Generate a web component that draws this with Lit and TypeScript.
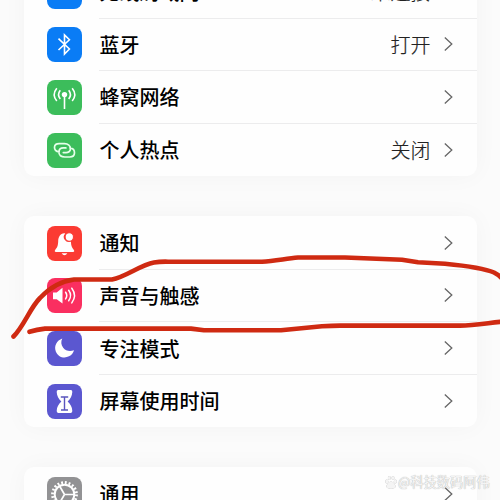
import { LitElement, html, svg, css, nothing } from "lit";
import { customElement, property } from "lit/decorators.js";

const glyphs: Record<string, unknown> = {
  wifi: svg`<path d="M8 15Q17.500 6 27 15M12 20Q17.500 15 23 20" fill="none" stroke="#fff" stroke-width="2"/>`,
  bluetooth: svg`<path d="M11.500 11.700 22.400 22 17.500 27V8L22.400 12.800 11.500 23" fill="none" stroke="#fff" stroke-width="1.600" stroke-linejoin="miter"/>`,
  cellular: svg`<circle cx="17.500" cy="14.600" r="2.700" fill="#fff"/>
    <path d="M17.500 15V29M13.300 10.300Q9.800 14.700 13.300 19.100M21.700 10.300Q25.200 14.700 21.700 19.100M9.800 8.300Q4.600 14.700 9.800 21.100M25.200 8.300Q30.400 14.700 25.200 21.100" fill="none" stroke="#fff" stroke-width="1.600"/>`,
  hotspot: svg`<path d="M12.200 18.800C9.300 18.600 7.400 16.700 7.500 14.300C7.600 11.900 9.500 10.700 12.200 10.700H17.500C21 10.700 23.600 12.700 23.500 15.700C23.400 18.300 21.300 19.800 18.500 19.600H16.300M22.900 14.800C25.800 15.200 27.600 17.300 27.500 19.900C27.400 22.500 25.500 24 22.800 24H17.800C14.200 24 11.800 22.300 11.900 19.100C12 16.500 13.900 14.800 16.600 14.900H18.900" fill="none" stroke="#e6ffea" stroke-width="1.700" stroke-linecap="round"/>`,
  bell: svg`<path d="M17.200 7.300C13.200 7.800 11.300 11 11.200 15C11 19.800 10.400 21.300 8.300 23.700C7.300 25 7.600 25.900 9 25.900H26C27.400 25.900 27.700 25 26.700 23.700C24.700 21.300 24.100 19.500 23.900 15.500A5 5 0 0 1 18.300 7.400Z" fill="#fff"/>
    <circle cx="22.300" cy="11" r="4.200" fill="#fff" stroke="#fb3b33" stroke-width="1.100"/><path d="M14.600 27.300H20.400Q17.500 31 14.600 27.300Z" fill="#fff"/>`,
  sound: svg`<path d="M6 14.400H9.700L15.500 9.800V25.400L9.700 21.300H6Z" fill="#fff"/>
    <path d="M18.600 14.200Q20.900 17.500 18.600 20.900M21.700 12.300Q25.400 17.500 21.700 22.800M24.800 10.200Q30.200 17.500 24.800 24.900" fill="none" stroke="#fff" stroke-width="1.500" stroke-linecap="round"/>`,
  moon: svg`<path d="M15.300 7.600C9.700 9.500 6.800 15.200 8.800 20.400C10.800 25.800 17 28 22 25.300C24.800 23.800 26.300 21.800 27 19.200C23.200 20.800 18.600 20 16.200 16.800C14 13.900 13.700 10.600 15.300 7.600Z" fill="#fff"/>`,
  hourglass: svg`<path d="M11.200 6H23.800Q25.500 6 25.300 8C25.100 12.200 23.500 14.800 20.600 17.400C23.500 20 25.100 22.700 25.300 26.800Q25.500 28.900 23.800 28.900H11.200Q9.500 28.900 9.700 26.800C9.900 22.700 11.500 20 14.400 17.400C11.500 14.800 9.900 12.200 9.700 8Q9.500 6 11.200 6Z" fill="#fff"/>
    <path d="M13.800 13H21.200M17.500 13V26M14 26H21" fill="none" stroke="#5a55bd" stroke-width="1.400"/>`,
  gear: svg`<circle cx="17.500" cy="17.500" r="12" fill="none" stroke="#fff" stroke-width="2.800" stroke-dasharray="1.885 1.885"/>
    <circle cx="17.500" cy="17.500" r="9.800" fill="none" stroke="#fff" stroke-width="2"/>
    <path d="M17.500 17.500H27M17.500 17.500 12.700 9.300M17.500 17.500 12.700 25.700" stroke="#fff" stroke-width="1.700"/>`,
};

interface Item { icon: string; tone: string; label: string; value?: string; }

const groups: Item[][] = [
  [
    { icon: "wifi", tone: "blue", label: "无线局域网", value: "未连接" },
    { icon: "bluetooth", tone: "blue", label: "蓝牙", value: "打开" },
    { icon: "cellular", tone: "green", label: "蜂窝网络" },
    { icon: "hotspot", tone: "green", label: "个人热点", value: "关闭" },
  ],
  [
    { icon: "bell", tone: "red", label: "通知" },
    { icon: "sound", tone: "pink", label: "声音与触感" },
    { icon: "moon", tone: "indigo", label: "专注模式" },
    { icon: "hourglass", tone: "indigo", label: "屏幕使用时间" },
  ],
  [{ icon: "gear", tone: "gray", label: "通用" }],
];

@customElement("settings-row")
class SettingsRow extends LitElement {
  @property({ attribute: false }) item!: Item;
  static styles = css`
    :host { display: flex; height: 52.75px; box-sizing: border-box; padding: 1.500px 24px 0 23.500px; align-items: center; }
    .icon { width: 35px; height: 35px; border-radius: 8px; flex: none; }
    .icon svg { display: block; }
    .blue { background: #0a7cf5; }
    .green { background: #3cbd5b; }
    .red { background: #fb3b33; }
    .pink { background: #fa2f60; }
    .indigo { background: #5b57d0; }
    .gray { background: #929294; }
    .label { margin-left: 17.500px; font-size: 20px; line-height: 30px; font-weight: 500; color: #000; flex: 1; }
    .value { font-size: 20px; line-height: 30px; font-weight: 300; color: #222; -webkit-text-stroke: 0.200px #222; margin-right: 13px; }
    .chevron { width: 9px; height: 16px; margin-top: -1px; flex: none; }
  `;
  render() {
    const { icon, tone, label, value } = this.item;
    return html`
      <div class="icon ${tone}"><svg width="35" height="35" viewBox="0 0 35 35">${glyphs[icon]}</svg></div>
      <span class="label">${label}</span>
      ${value ? html`<span class="value">${value}</span>` : nothing}
      <svg class="chevron" viewBox="0 0 9 16"><path d="M.8 1.500 7.800 8 .8 14.500" fill="none" stroke="#666" stroke-width="1.300"/></svg>
    `;
  }
}

@customElement("app-root")
class AppRoot extends LitElement {
  static styles = css`
    :host { display: block; position: relative; width: 500px; height: 500px; overflow: hidden; background: #fbfbfb;
      font-family: "Noto Sans CJK SC", sans-serif; }
    .list { display: flex; flex-direction: column; gap: 40.100px; margin-top: -35.200px; padding: 0 23.500px; }
    .card { background: #fefefe; border-radius: 10px; box-shadow: 0 0 24px rgba(0, 0, 0, 0.035); }
    .item + .item { background: linear-gradient(#ececed, #ececed) 75px 0 / 100% 1px no-repeat; }
    .marker { position: absolute; inset: 0; }
    .watermark { position: absolute; left: 385px; top: 472px; display: flex; align-items: center; gap: 1px;
      font-size: 13.200px; line-height: 20px; color: #f4f4f4; white-space: nowrap;
      text-shadow: 0 0 1px #b4b4b4, 0 0 1px #c8c8c8; }
    .watermark svg { filter: drop-shadow(0 0 0.700px #aaa); }
  `;
  render() {
    return html`
      <div class="list">
        ${groups.map((items) => html`<section class="card">
          ${items.map((item) => html`<settings-row class="item" .item=${item}></settings-row>`)}
        </section>`)}
      </div>
      <svg class="marker" width="500" height="500" viewBox="0 0 500 500" fill="none" stroke="#cf2a12" stroke-width="4.600" stroke-linecap="round" stroke-linejoin="round">
        <path d="M13.500 336.500C24 326 30 308 40 298C49 288.500 61 281 74 279.500H112C126 277 140 265 154 262.500Q160 261.500 168 261.700H262C275 261 286 258.500 298 257.500H345L402 259.700L418 262.200L445 263.700C464 265.500 485 268.500 494 272.500Q500 275.500 504 281"/>
        <path d="M29.500 331.800Q37 329.600 45 328.600H191L204 330.200H281L322 326.200Q332 325.600 340 325.600H460C474 325.400 488 323 504 321.500"/>
      </svg>
      <div class="watermark">
        <svg width="12" height="15" viewBox="0 0 12 15" fill="#f4f4f4"><ellipse cx="1.800" cy="6.500" rx="1.500" ry="1.900"/><ellipse cx="4.300" cy="3" rx="1.400" ry="2"/><ellipse cx="8" cy="3" rx="1.400" ry="2"/><ellipse cx="10.300" cy="6.500" rx="1.500" ry="1.900"/><path d="M6 6.500C8 6.500 11 10 10.500 12Q9.800 14 6 13.200Q2 14 1.500 12C1 10 4 6.500 6 6.500Z"/></svg>
        <span>@科技数码阿伟</span>
      </div>
    `;
  }
}
